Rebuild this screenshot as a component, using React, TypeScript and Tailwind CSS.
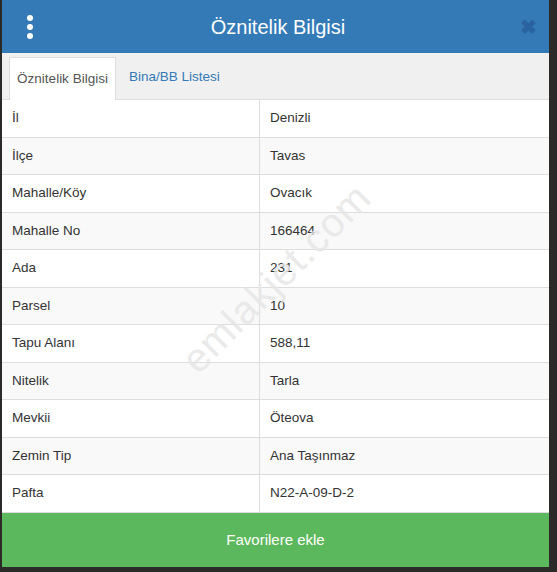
import React from "react";

const rows: [string, string][] = [
  ["İl", "Denizli"],
  ["İlçe", "Tavas"],
  ["Mahalle/Köy", "Ovacık"],
  ["Mahalle No", "166464"],
  ["Ada", "231"],
  ["Parsel", "10"],
  ["Tapu Alanı", "588,11"],
  ["Nitelik", "Tarla"],
  ["Mevkii", "Öteova"],
  ["Zemin Tip", "Ana Taşınmaz"],
  ["Pafta", "N22-A-09-D-2"],
];

const App: React.FC = () => {
  return (
    <div
      className="w-[557px] h-[572px] bg-[#2b2a28] overflow-hidden"
      style={{ fontFamily: '"Liberation Sans", Arial, sans-serif' }}
    >
      <div className="ml-[2px] w-[547px] h-[567px] flex flex-col bg-white">
        {/* header */}
        <div className="h-[53px] bg-[#337ab7] flex items-center px-[22px]">
          <div className="flex flex-col gap-[3px] w-[12px] items-center">
            <span className="w-[6px] h-[6px] rounded-full bg-white" />
            <span className="w-[6px] h-[6px] rounded-full bg-white" />
            <span className="w-[6px] h-[6px] rounded-full bg-white" />
          </div>
          <div className="flex-1 text-center text-white text-[20px]">
            Öznitelik Bilgisi
          </div>
          <div className="text-[#2a63a0] text-[20px] font-bold leading-none mr-[-10px]">
            ✖
          </div>
        </div>

        {/* tabs */}
        <div className="h-[47px] bg-[#f0f0f0] flex items-end px-[7px] border-b border-[#dddddd]">
          <div className="h-[43px] w-[107px] bg-white border border-b-0 border-[#dddddd] flex items-center justify-center text-[13.5px] text-[#555555] -mb-px">
            Öznitelik Bilgisi
          </div>
          <div className="h-[43px] px-[13px] flex items-center text-[13.5px] text-[#337ab7]">
            Bina/BB Listesi
          </div>
        </div>

        {/* attribute table */}
        <div className="relative flex flex-col">
          {rows.map(([k, v], i) => (
            <div
              key={k}
              className={`flex h-[37.5px] border-b border-[#dddddd] last:border-b-0 text-[13.5px] text-[#333333] ${
                i % 2 === 1 ? "bg-[#f9f9f9]" : "bg-white"
              }`}
            >
              <div className="w-[258px] border-r border-[#dddddd] flex items-center pl-[10px]">
                {k}
              </div>
              <div className="flex-1 flex items-center pl-[10px]">{v}</div>
            </div>
          ))}
          <div className="absolute inset-0 flex items-center justify-center pb-[56px] pointer-events-none">
            <span className="-rotate-45 text-[40px] text-[#e6e6e6] opacity-80 tracking-wide whitespace-nowrap">
              emlakjet.com
            </span>
          </div>
        </div>

        {/* footer action */}
        <button className="flex-1 bg-[#5cb85c] text-white text-[15px] flex items-center justify-center">
          Favorilere ekle
        </button>
      </div>
    </div>
  );
};

export default App;
